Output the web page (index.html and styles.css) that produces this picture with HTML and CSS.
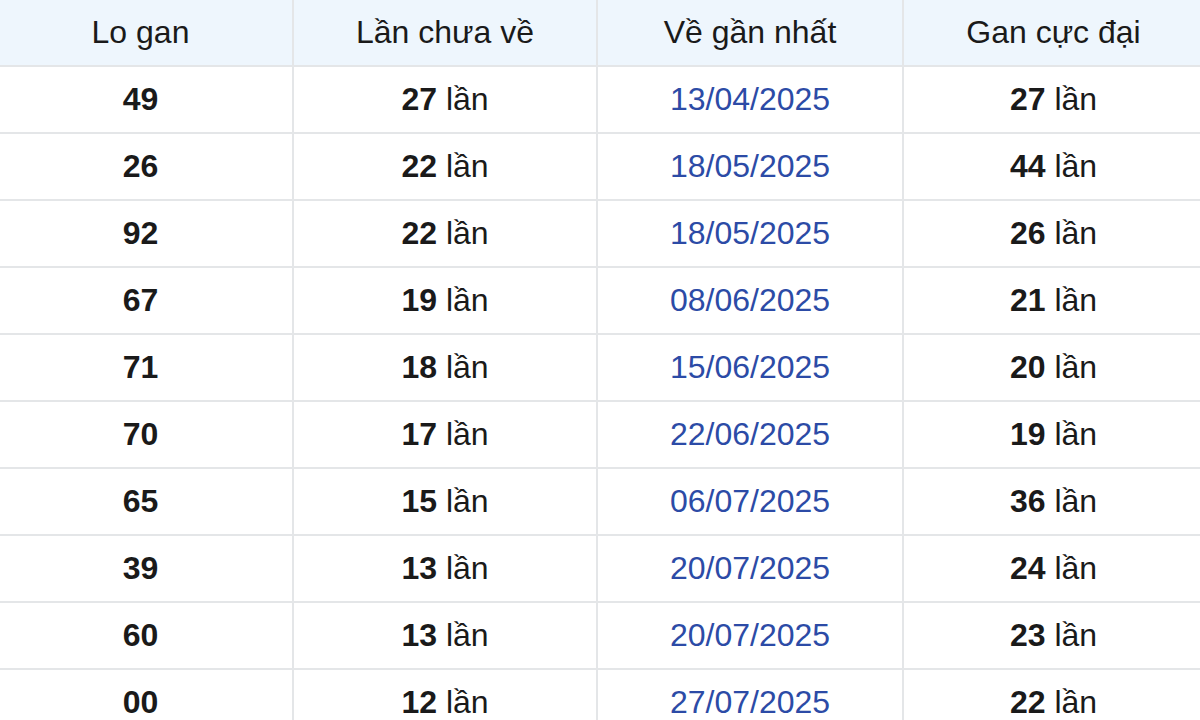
FILE: index.html
```html
<!DOCTYPE html>
<html lang="vi">
<head>
<meta charset="utf-8">
<link rel="stylesheet" href="styles.css">
</head>
<body>
<table class="gan">
<colgroup><col class="c1"><col class="c2"><col class="c3"><col class="c4"></colgroup>
<thead>
<tr><th>Lo gan</th><th>Lần chưa về</th><th>Về gần nhất</th><th>Gan cực đại</th></tr>
</thead>
<tbody>
<tr><td class="num">49</td><td><b>27</b> lần</td><td class="date">13/04/2025</td><td><b>27</b> lần</td></tr>
<tr><td class="num">26</td><td><b>22</b> lần</td><td class="date">18/05/2025</td><td><b>44</b> lần</td></tr>
<tr><td class="num">92</td><td><b>22</b> lần</td><td class="date">18/05/2025</td><td><b>26</b> lần</td></tr>
<tr><td class="num">67</td><td><b>19</b> lần</td><td class="date">08/06/2025</td><td><b>21</b> lần</td></tr>
<tr><td class="num">71</td><td><b>18</b> lần</td><td class="date">15/06/2025</td><td><b>20</b> lần</td></tr>
<tr><td class="num">70</td><td><b>17</b> lần</td><td class="date">22/06/2025</td><td><b>19</b> lần</td></tr>
<tr><td class="num">65</td><td><b>15</b> lần</td><td class="date">06/07/2025</td><td><b>36</b> lần</td></tr>
<tr><td class="num">39</td><td><b>13</b> lần</td><td class="date">20/07/2025</td><td><b>24</b> lần</td></tr>
<tr><td class="num">60</td><td><b>13</b> lần</td><td class="date">20/07/2025</td><td><b>23</b> lần</td></tr>
<tr><td class="num">00</td><td><b>12</b> lần</td><td class="date">27/07/2025</td><td><b>22</b> lần</td></tr>
</tbody>
</table>
</body>
</html>
```
FILE: styles.css
```css
html, body {
  margin: 0;
  padding: 0;
  background: #ffffff;
  overflow: hidden;
}
.gan {
  border-collapse: collapse;
  table-layout: fixed;
  width: 1216px;
  margin-left: -13px;
  font-family: "Liberation Sans", Arial, sans-serif;
  font-size: 32px;
  color: #1a1a1a;
}
.gan .c1 { width: 305px; }
.gan .c2 { width: 304px; }
.gan .c3 { width: 306px; }
.gan .c4 { width: 301px; }
.gan th, .gan td {
  border: 2px solid #e4e6e8;
  text-align: center;
  vertical-align: middle;
  padding: 0;
  height: 65px;
}
.gan th {
  background: #eef6fd;
  font-weight: normal;
  border-top: none;
}
.gan td.num { font-weight: bold; }
.gan td b { font-weight: bold; }
.gan td.date { color: #2c4ba6; }
```
